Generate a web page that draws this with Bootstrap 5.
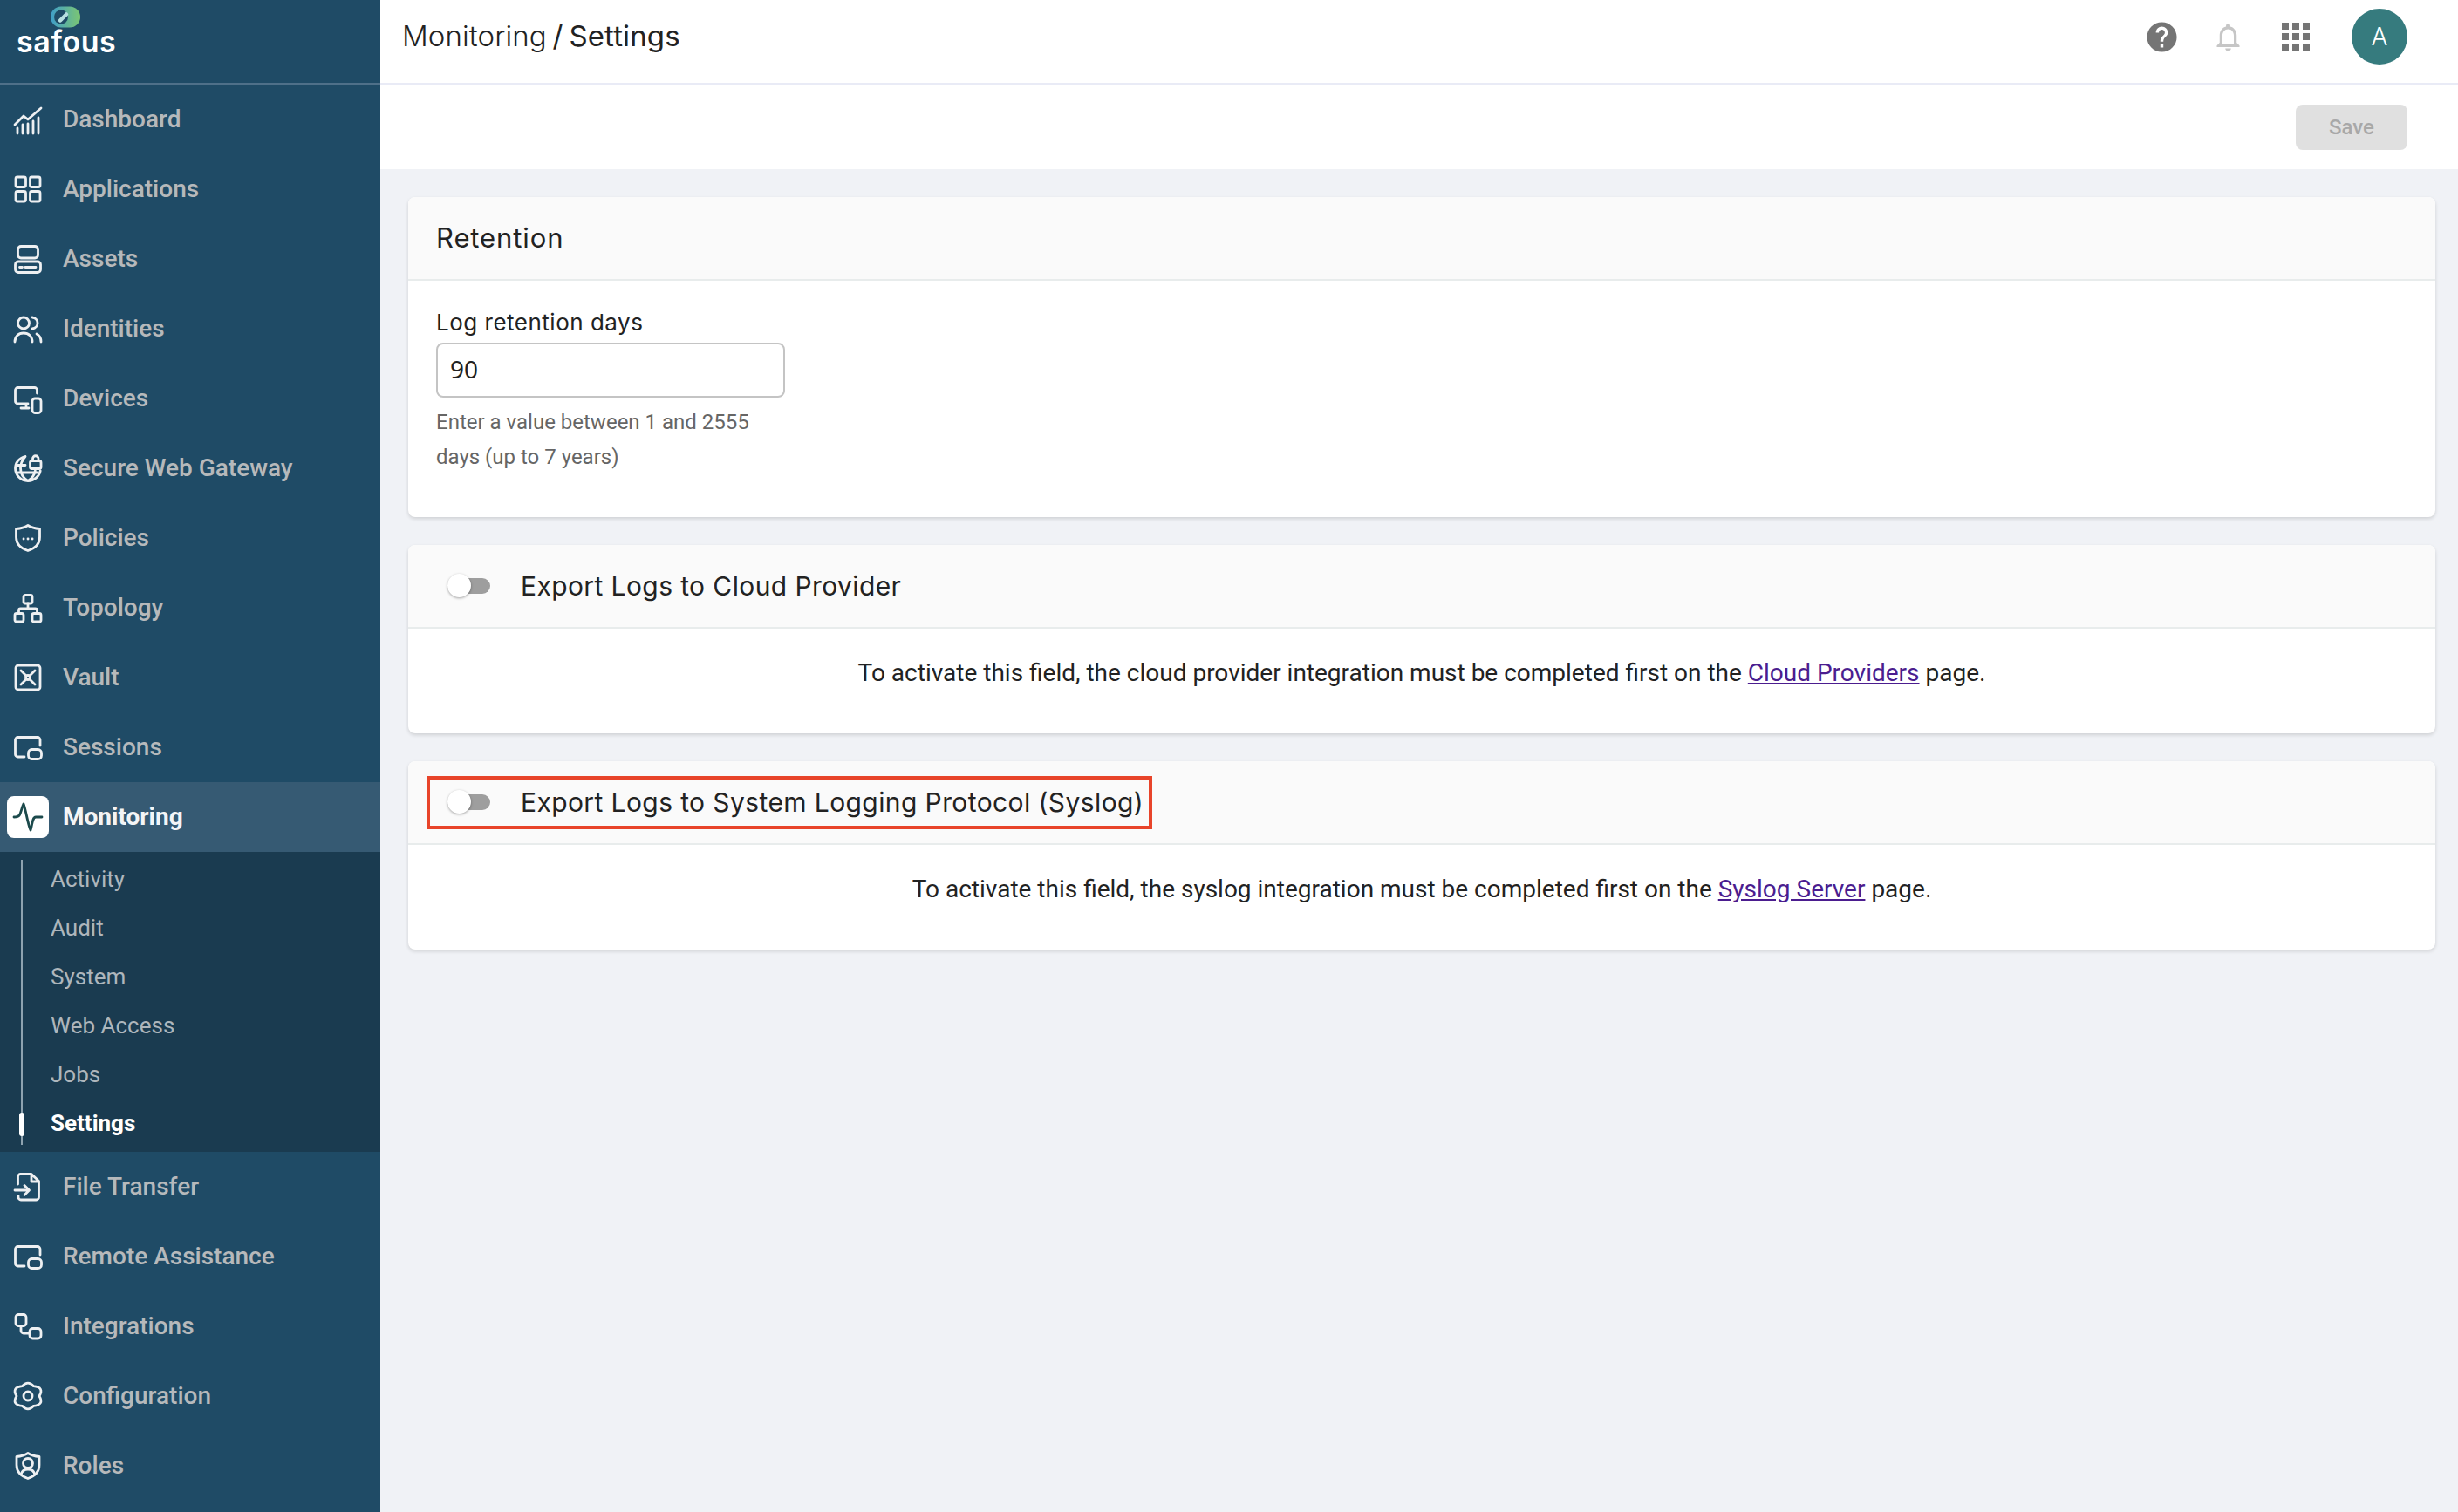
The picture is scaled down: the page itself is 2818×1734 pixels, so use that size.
<!DOCTYPE html>
<html lang="en">
<head>
<meta charset="utf-8">
<title>Monitoring / Settings</title>
<link href="https://cdn.jsdelivr.net/npm/bootstrap@5.3.0/dist/css/bootstrap.min.css" rel="stylesheet">
<style>
html,body{height:100%;margin:0;}
body{font-family:Roboto,"Liberation Sans",sans-serif;background:#f0f2f6;color:#212121;overflow:hidden;}
.sf-shell{height:1734px;}
.sf-side{width:436px;flex:none;background:#1f4b66;}
.sf-brand{height:97px;border-bottom:2px solid #4f7089;padding:7px 0 0 19px;}
.sf-brand svg{display:block;margin-left:39px;width:34px;height:25px;}
.sf-word{font-family:Inter,sans-serif;font-weight:600;font-size:34px;line-height:26px;letter-spacing:.6px;color:#fff;display:block;margin-top:3px;}
.sf-side .nav-link{height:80px;padding:0 0 0 16px;display:flex;align-items:center;gap:24px;color:#b6b9bb;font-weight:500;font-size:28px;}
.sf-side .nav-link svg{width:32px;height:32px;flex:none;overflow:visible;fill:none;stroke:#eef0f2;stroke-width:2.8;stroke-linecap:round;stroke-linejoin:round;}
.sf-side .sf-active{background:#365a73;color:#f4f5f6;font-weight:700;position:relative;}
.sf-tile{width:48px;height:48px;border-radius:8px;background:#fff;display:flex;align-items:center;justify-content:center;margin-left:-8px;margin-right:-8px;flex:none;}
.sf-side .sf-active svg{stroke:#1c4a4c;}
.sf-sub{background:#1a3b50;padding:3px 0 5px;position:relative;}
.sf-sub::before{content:"";position:absolute;left:24px;top:9px;bottom:8px;width:2px;background:#8ea2af;}
.sf-sub .nav-link{height:56px;padding:0 0 0 58px;color:#aeb6bc;font-weight:400;font-size:26px;gap:0;position:relative;}
.sf-sub .sf-cur{color:#fff;font-weight:700;}
.sf-sub .sf-cur::before{content:"";position:absolute;left:22px;top:16px;width:6px;height:27px;border-radius:3px;background:#fff;}
.sf-top{height:97px;background:#fff;border-bottom:2px solid #e9ebf6;padding:0 58px 11px 25px;}
.sf-crumb{font-family:Inter,sans-serif;font-size:33px;letter-spacing:.1px;color:#222;word-spacing:-2.5px;}
.sf-crumb b{font-weight:400;}
.sf-crumb i{font-style:normal;font-weight:300;}
.sf-help{width:41px;height:41px;fill:#757575;margin-right:36px;}
.sf-bell{width:39px;height:39px;fill:#c6c6c6;margin-right:42px;}
.sf-grid{width:32px;height:32px;fill:#757575;margin-right:48px;}
.sf-ava{width:64px;height:64px;border-radius:50%;background:#367b7e;color:#fff;font-size:28px;font-weight:300;font-family:Inter,sans-serif;}
.sf-bar{height:97px;background:#fff;padding:0 58px 0 0;}
.btn.sf-save:disabled{width:128px;height:52px;padding:0;border:0;border-radius:8px;background:#e0e0e0;color:#a8a8a8;font-size:24px;font-weight:500;opacity:1;}
.sf-body{padding:32px 26px 0 32px;gap:32px;}
.sf-card{border:0;border-radius:8px;box-shadow:0 2px 4px rgba(0,0,0,.14);background:#fff;overflow:hidden;}
.sf-card .card-header{height:96px;background:#fafafa;border-bottom:2px solid #e8ecec;border-radius:0;padding:0 32px;font-family:Inter,sans-serif;font-size:31px;letter-spacing:.9px;font-weight:400;color:#222;display:flex;align-items:center;}
.sf-card .sf-hsw{padding-left:45px;font-size:30px;letter-spacing:.4px;}
.sf-flag{display:inline-flex;align-items:center;height:61px;margin-left:-24px;padding:0 6px 0 20px;border:4px solid #e8442a;}
.sf-tog{width:49px;height:18px;border-radius:9px;background:#9e9e9e;margin-right:35px;position:relative;flex:none;}
.sf-tog::before{content:"";position:absolute;left:0;top:-5px;width:27px;height:27px;border-radius:50%;background:#fff;box-shadow:0 1px 3px rgba(0,0,0,.35);}
.sf-form{padding:32px 32px 49px;}
.sf-lab{font-family:Inter,sans-serif;font-size:26px;letter-spacing:.5px;line-height:32px;margin:0 0 7px;color:#222;display:block;}
.sf-field{width:400px;}
.sf-input{height:63px;border:2px solid #c4c4c4;border-radius:8px;font-family:"Noto Sans",sans-serif;font-size:28px;padding:0 14px 3px;color:#222;}
.sf-hint{font-size:24px;line-height:40px;color:#666;margin-top:8px;}
.sf-msg{padding:33px 32px 51px;font-size:28px;line-height:36px;text-align:center;color:#222;}
.sf-msg a{color:#4b1d8f;}
</style>
</head>
<body>
<div class="d-flex sf-shell">
  <aside class="sf-side d-flex flex-column">
    <div class="sf-brand">
      <svg viewBox="0 0 34 25" aria-hidden="true">
        <defs><linearGradient id="lg" x1="0" x2="1" y1="0" y2="0"><stop offset="0" stop-color="#3f9ec9"/><stop offset="1" stop-color="#7cc672"/></linearGradient></defs>
        <rect x="0" y="0.5" width="34" height="24" rx="12" fill="url(#lg)"/>
        <circle cx="12" cy="12.5" r="8" fill="#1f4b66"/>
        <path d="M11 16.5 18 9.5" stroke="#b8dfe0" stroke-width="4.5" stroke-linecap="round"/>
      </svg>
      <span class="sf-word">safous</span>
    </div>
    <nav class="nav flex-column">
      <a class="nav-link" href="#"><svg viewBox="0 0 32 32"><path d="M1 22 11 12l5 4L31 3M4 26v6M10 22v10M16 21v11M22 18v14M28 14v18"/></svg>Dashboard</a>
      <a class="nav-link" href="#"><svg viewBox="0 0 32 32"><rect x="2" y="2" width="11.5" height="11.5" rx="2"/><rect x="18.5" y="2" width="11.5" height="11.5" rx="2"/><rect x="2" y="18.5" width="11.5" height="11.5" rx="2"/><rect x="18.5" y="18.5" width="11.5" height="11.5" rx="2"/></svg>Applications</a>
      <a class="nav-link" href="#"><svg viewBox="0 0 32 32"><rect x="4.5" y="1.5" width="23" height="13.5" rx="3.5"/><rect x="1.5" y="19" width="29" height="12.5" rx="3.5"/><path d="M6.5 25.5h3M13 25.5h12"/></svg>Assets</a>
      <a class="nav-link" href="#"><svg viewBox="0 0 32 32"><circle cx="11" cy="9.5" r="6.5"/><path d="M1 31c0-6 4-10 10-10s10 4 10 10M21 3c4 .5 6 3.5 6 6.5s-2 6-6 6.5M26 22c3 1.500 5 4.500 5 9"/></svg>Identities</a>
      <a class="nav-link" href="#"><svg viewBox="0 0 32 32"><path d="M26.500 10V6.500a3 3 0 0 0-3-3H4.500a3 3 0 0 0-3 3V19a3 3 0 0 0 3 3H16M14 22v5M8 27h9"/><rect x="21" y="16" width="10" height="16.500" rx="3"/></svg>Devices</a>
      <a class="nav-link" href="#"><svg viewBox="0 0 32 32"><path d="M13 2.500C6 4 1.500 9.500 1.500 16c0 8 6.500 14.500 14.500 14.500 7 0 13-5 14.200-11.500M13 2.500C9 7 7.500 12 7.500 16c0 5 2 10.500 8.500 14.500 5-3 7.500-7 8.300-11.500M2 12.500h11M2.500 21h24"/><rect x="18.500" y="7.500" width="12.500" height="9" rx="2"/><path d="M21.500 7.500V5a3.200 3.200 0 0 1 6.500 0v2.500"/></svg>Secure Web Gateway</a>
      <a class="nav-link" href="#"><svg viewBox="0 0 32 32"><path d="M16 1.500C20 4 24 5 29.500 5.500V15c0 8-5.500 13-13.500 15.500C8 28 2.500 23 2.500 15V5.500C8 5 12 4 16 1.500Z"/><path d="M11 17h.1M16 17h.1M21 17h.1"/></svg>Policies</a>
      <a class="nav-link" href="#"><svg viewBox="0 0 32 32"><rect x="11" y="1.500" width="10" height="9.500" rx="2"/><rect x="1" y="22.500" width="10" height="9.500" rx="2"/><rect x="21" y="22.500" width="10" height="9.500" rx="2"/><path d="M16 11v6M5.500 22.500V19a2 2 0 0 1 2-2h17a2 2 0 0 1 2 2v3.500"/></svg>Topology</a>
      <a class="nav-link" href="#"><svg viewBox="0 0 32 32"><rect x="2" y="2" width="28" height="28" rx="3"/><circle cx="16" cy="16" r="2.5"/><path d="M8 8l6 6M24 8l-6 6M8 24l6-6M24 24l-6-6"/></svg>Vault</a>
      <a class="nav-link" href="#"><svg viewBox="0 0 32 32"><path d="M12 27H4.500a3 3 0 0 1-3-3V7.500a3 3 0 0 1 3-3H27a3 3 0 0 1 3 3V14"/><rect x="16.500" y="18.500" width="15" height="11" rx="4"/></svg>Sessions</a>
      <a class="nav-link sf-active" href="#"><span class="sf-tile"><svg viewBox="0 0 32 32"><path d="M0 16c3 0 5 0 6.500-2.500C8 11 9 5 11 1c2.500 6 4.500 22 8 30 2-6 2-15 6-15h7"/></svg></span>Monitoring</a>
      <div class="sf-sub nav flex-column">
        <a class="nav-link" href="#">Activity</a>
        <a class="nav-link" href="#">Audit</a>
        <a class="nav-link" href="#">System</a>
        <a class="nav-link" href="#">Web Access</a>
        <a class="nav-link" href="#">Jobs</a>
        <a class="nav-link sf-cur" href="#">Settings</a>
      </div>
      <a class="nav-link" href="#"><svg viewBox="0 0 32 32"><path d="M4.500 13V4.500a3 3 0 0 1 3-3H20l8.500 8V28a3 3 0 0 1-3 3H8a3 3 0 0 1-3-3v-1.500M20 2v8h8M1 20h16M12 14.500l5.500 5.500-5.500 5.500"/></svg>File Transfer</a>
      <a class="nav-link" href="#"><svg viewBox="0 0 32 32"><path d="M12 27H4.500a3 3 0 0 1-3-3V7.500a3 3 0 0 1 3-3H27a3 3 0 0 1 3 3V14"/><rect x="16.500" y="18.500" width="15" height="11" rx="4"/></svg>Remote Assistance</a>
      <a class="nav-link" href="#"><svg viewBox="0 0 32 32"><rect x="2" y="2.500" width="12" height="13" rx="3"/><rect x="18" y="18.500" width="13" height="11.500" rx="3.500"/><path d="M8 15.500V21a3 3 0 0 0 3 3h7"/></svg>Integrations</a>
      <a class="nav-link" href="#"><svg viewBox="0 0 32 32"><path d="M9.500 4.700Q16-2.500 22.500 4.700Q35 6 29 16Q35 26 22.500 27.300Q16 34.500 9.500 27.300Q-3 26 3 16Q-3 6 9.500 4.700Z"/><circle cx="16" cy="16" r="5"/></svg>Configuration</a>
      <a class="nav-link" href="#"><svg viewBox="0 0 32 32"><path d="M16 1.500C20 4 24 5 29 5.500V15c0 8-5.500 13-13 15.500C8.500 28 3 23 3 15V5.500C8 5 12 4 16 1.500Z"/><circle cx="16" cy="13" r="5.500"/><path d="M8 26c1-4 4-6 8-6s7 2 8 6"/></svg>Roles</a>
    </nav>
  </aside>
  <main class="flex-grow-1 d-flex flex-column">
    <header class="sf-top d-flex align-items-center">
      <div class="sf-crumb flex-grow-1"><i>Monitoring</i> / <b>Settings</b></div>
      <svg class="sf-help" viewBox="0 0 24 24"><path d="M12 2C6.480 2 2 6.480 2 12s4.480 10 10 10 10-4.480 10-10S17.520 2 12 2zm1 17h-2v-2h2v2zm2.070-7.750l-.9.920C13.450 12.900 13 13.500 13 15h-2v-.5c0-1.100.45-2.100 1.170-2.830l1.240-1.260c.37-.36.59-.86.59-1.410 0-1.100-.9-2-2-2s-2 .9-2 2H8c0-2.210 1.790-4 4-4s4 1.790 4 4c0 .88-.36 1.680-.93 2.250z"/></svg>
      <svg class="sf-bell" viewBox="0 0 24 24"><path d="M12 22c1.100 0 2-.9 2-2h-4c0 1.100.9 2 2 2zm6-6v-5c0-3.070-1.630-5.640-4.500-6.320V4c0-.83-.67-1.500-1.500-1.500s-1.500.67-1.500 1.500v.68C7.640 5.360 6 7.920 6 11v5l-2 2v1h16v-1l-2-2zm-2 1H8v-6c0-2.480 1.510-4.500 4-4.500s4 2.020 4 4.500v6z"/></svg>
      <svg class="sf-grid" viewBox="0 0 32 32"><rect width="8" height="8"/><rect x="12" width="8" height="8"/><rect x="24" width="8" height="8"/><rect y="12" width="8" height="8"/><rect x="12" y="12" width="8" height="8"/><rect x="24" y="12" width="8" height="8"/><rect y="24" width="8" height="8"/><rect x="12" y="24" width="8" height="8"/><rect x="24" y="24" width="8" height="8"/></svg>
      <div class="sf-ava d-flex align-items-center justify-content-center">A</div>
    </header>
    <div class="sf-bar d-flex align-items-center justify-content-end">
      <button type="button" class="btn sf-save" disabled>Save</button>
    </div>
    <div class="sf-body d-flex flex-column">
      <section class="card sf-card">
        <div class="card-header">Retention</div>
        <div class="sf-form">
          <div class="sf-field">
            <label class="sf-lab" for="days">Log retention days</label>
            <input id="days" class="form-control sf-input" value="90">
            <div class="sf-hint">Enter a value between 1 and 2555 days (up to 7 years)</div>
          </div>
        </div>
      </section>
      <section class="card sf-card">
        <div class="card-header sf-hsw"><span class="sf-tog"></span>Export Logs to Cloud Provider</div>
        <div class="sf-msg">To activate this field, the cloud provider integration must be completed first on the <a href="#">Cloud Providers</a> page.</div>
      </section>
      <section class="card sf-card">
        <div class="card-header sf-hsw"><div class="sf-flag"><span class="sf-tog"></span>Export Logs to System Logging Protocol (Syslog)</div></div>
        <div class="sf-msg">To activate this field, the syslog integration must be completed first on the <a href="#">Syslog Server</a> page.</div>
      </section>
    </div>
  </main>
</div>
<script src="https://cdn.jsdelivr.net/npm/bootstrap@5.3.0/dist/js/bootstrap.bundle.min.js"></script>
</body>
</html>
